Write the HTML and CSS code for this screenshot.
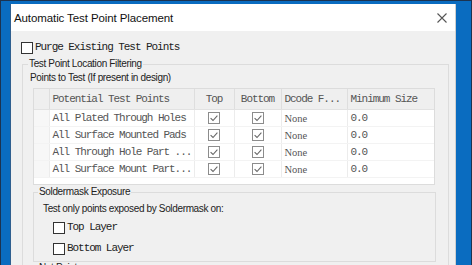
FILE: index.html
```html
<!DOCTYPE html>
<html lang="en">
<head>
    <meta charset="UTF-8">
    <meta name="viewport" content="width=device-width, initial-scale=1.0">
    <title>Automatic Test Point Placement</title>
    <link rel="stylesheet" href="styles.css">
</head>
<body>
    <div class="screen">
        <div class="dialog">
            <div class="titlebar">
                <span class="title">Automatic Test Point Placement</span>
                <svg class="close" width="10" height="10" viewBox="0 0 10 10">
                    <path d="M0.5 0.5 L9.5 9.5 M9.5 0.5 L0.5 9.5" stroke="#555" stroke-width="1.1" fill="none"/>
                </svg>
            </div>

            <div class="content">
                <label class="check mono purge"><span class="box"></span>Purge Existing Test Points</label>

                <fieldset class="group outer">
                    <legend>Test Point Location Filtering</legend>
                    <div class="sublabel">Points to Test (If present in design)</div>

                    <div class="gridwrap">
                        <table class="grid mono">
                            <colgroup>
                                <col style="width:15px">
                                <col style="width:145px">
                                <col style="width:40px">
                                <col style="width:47px">
                                <col style="width:66px">
                                <col style="width:87px">
                            </colgroup>
                            <thead>
                                <tr>
                                    <th></th>
                                    <th class="left">Potential Test Points</th>
                                    <th>Top</th>
                                    <th>Bottom</th>
                                    <th class="left">Dcode F...</th>
                                    <th class="left">Minimum Size</th>
                                </tr>
                            </thead>
                            <tbody id="rows"></tbody>
                        </table>
                    </div>

                    <fieldset class="group inner">
                        <legend>Soldermask Exposure</legend>
                        <div class="note">Test only points exposed by Soldermask on:</div>
                        <label class="check mono layer"><span class="box"></span>Top Layer</label>
                        <label class="check mono layer second"><span class="box"></span>Bottom Layer</label>
                    </fieldset>

                    <fieldset class="group inner net">
                        <legend>Net Points</legend>
                        <div class="note">&nbsp;</div>
                    </fieldset>
                </fieldset>
            </div>
        </div>
    </div>

    <script>
        // rows of the test point grid
        const points = [
            'All Plated Through Holes',
            'All Surface Mounted Pads',
            'All Through Hole Part ...',
            'All Surface Mount Part...'
        ];

        const tick = '<svg width="12" height="12" viewBox="0 0 12 12">' +
            '<rect x="0.5" y="0.5" width="11" height="11" fill="#fff" stroke="#8c8c8c"/>' +
            '<path d="M2.6 6.2 L5 8.5 L9.4 3.6" stroke="#666" stroke-width="1.1" fill="none"/></svg>';

        const body = document.getElementById('rows');
        points.forEach(name => {
            const tr = document.createElement('tr');
            tr.innerHTML =
                '<td class="gutter"></td>' +
                '<td>' + name + '</td>' +
                '<td class="mid">' + tick + '</td>' +
                '<td class="mid">' + tick + '</td>' +
                '<td class="serif">None</td>' +
                '<td>0.0</td>';
            body.appendChild(tr);
        });
    </script>
</body>
</html>
```

FILE: styles.css
```css
/* window frame */
body {
    margin: 0;
    font-family: "Liberation Sans", Arial, sans-serif;
    color: #222;
}

.screen {
    width: 472px;
    height: 265px;
    box-sizing: border-box;
    overflow: hidden;
    background: #0a6cc0;
    border: 1px solid #1c3350;
    border-bottom: none;
    padding: 3px 15px 0 9px;
}

.dialog {
    width: 446px;
    height: 400px;
    box-sizing: border-box;
    background: #f0f0f0;
    border-left: 1px solid #2f5f8f;
    border-right: 1px solid #cfcfcf;
}

.titlebar {
    height: 27px;
    background: #fff;
    display: flex;
    align-items: center;
    justify-content: space-between;
    padding: 0 8px 0 3px;
}

.title {
    font-size: 11.5px;
    letter-spacing: -0.1px;
    color: #111;
    padding-top: 1px;
}

.close {
    display: block;
}

.content {
    padding-left: 10px;
}

/* monospace labels */
.mono {
    font-family: "Liberation Mono", "Courier New", monospace;
    font-size: 11px;
    letter-spacing: -1.05px;
}

.check {
    display: flex;
    align-items: center;
    height: 13px;
    line-height: 13px;
    color: #222;
}

.check .box {
    width: 10px;
    height: 10px;
    border: 1px solid #333;
    background: #fff;
    margin-right: 2px;
}

.purge {
    margin-top: 10px;
}

/* group boxes */
.group {
    margin: 0;
    padding: 0;
    border: 1px solid #dcdcdc;
    min-width: 0;
}

.group legend {
    font-size: 10px;
    letter-spacing: -0.35px;
    line-height: 12px;
    padding: 0 1px;
    color: #222;
}

.outer {
    width: 427px;
    box-sizing: border-box;
    margin: 4px 0 0 1px;
    padding: 0 11px 20px 10px;
}

.outer > legend {
    margin-left: -5px;
}

.sublabel {
    font-size: 10px;
    letter-spacing: -0.35px;
    line-height: 12px;
    margin: 2px 0 4px -3px;
}

/* grid */
.gridwrap {
    width: 402px;
    height: 97px;
    box-sizing: border-box;
    border: 1px solid #dcdcdc;
    background: #fff;
    overflow: hidden;
}

.grid {
    width: 400px;
    table-layout: fixed;
    border-collapse: collapse;
    color: #555;
}

.grid th {
    height: 20px;
    padding: 0;
    background: #efefef;
    font-weight: normal;
    text-align: center;
    white-space: nowrap;
    border-right: 1px solid #dedede;
    border-bottom: 1px solid #e2e2e2;
}

.grid th.left {
    text-align: left;
    padding-left: 3px;
}

.grid th:last-child {
    border-right: none;
}

.grid td {
    height: 16px;
    padding: 0 0 0 3px;
    white-space: nowrap;
    overflow: hidden;
    border-right: 1px solid #ececec;
    border-bottom: 1px solid #f3f3f3;
}

.grid td:last-child {
    border-right: none;
}

.grid td.gutter {
    background: #f7f7f7;
    padding: 0;
}

.grid td.mid {
    text-align: center;
    padding: 0;
}

.grid td.mid svg {
    display: block;
    margin: 0 auto;
}

.grid td.serif {
    font-family: "Liberation Serif", serif;
    font-size: 10.5px;
    letter-spacing: 0;
}

/* soldermask box */
.inner {
    width: 403px;
    box-sizing: border-box;
    margin-top: 1px;
    padding: 0 0 6px 9px;
}

.inner > legend {
    margin-left: -5px;
}

.note {
    font-size: 10px;
    letter-spacing: -0.35px;
    line-height: 12px;
    margin-top: 5px;
}

.layer {
    margin: 6px 0 0 10px;
}

.layer.second {
    margin-top: 8px;
}

.net {
    margin-top: 0;
}
```
